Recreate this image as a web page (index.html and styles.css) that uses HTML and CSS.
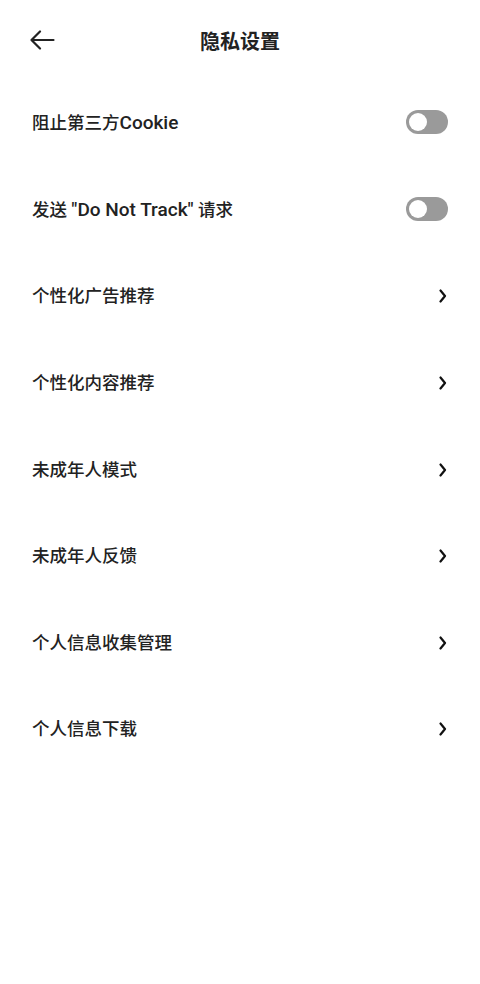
FILE: index.html
```html
<!DOCTYPE html>
<html lang="zh-CN">
<head>
<meta charset="utf-8">
<title>隐私设置</title>
<link rel="stylesheet" href="styles.css">
</head>
<body>
<div class="page">
  <header class="topbar">
    <svg class="back" width="26" height="20" viewBox="0 0 26 20" aria-hidden="true">
      <path d="M24.5 10H2.5M11 1.5L2.5 10L11 18.5" fill="none" stroke="#222" stroke-width="2.2" stroke-linecap="round" stroke-linejoin="round"/>
    </svg>
    <h1 class="title">隐私设置</h1>
  </header>
  <ul class="list">
    <li class="row"><span class="label">阻止第三方<span class="latin">Cookie</span></span><span class="switch"><span class="knob"></span></span></li>
    <li class="row"><span class="label">发送 <span class="latin">"Do Not Track"</span> 请求</span><span class="switch"><span class="knob"></span></span></li>
    <li class="row"><span class="label">个性化广告推荐</span><svg class="chev" width="8" height="14" viewBox="0 0 8 14"><path d="M1.5 1.5L6 7L1.5 12.5" fill="none" stroke="#111" stroke-width="2.2" stroke-linecap="round" stroke-linejoin="round"/></svg></li>
    <li class="row"><span class="label">个性化内容推荐</span><svg class="chev" width="8" height="14" viewBox="0 0 8 14"><path d="M1.5 1.5L6 7L1.5 12.5" fill="none" stroke="#111" stroke-width="2.2" stroke-linecap="round" stroke-linejoin="round"/></svg></li>
    <li class="row"><span class="label">未成年人模式</span><svg class="chev" width="8" height="14" viewBox="0 0 8 14"><path d="M1.5 1.5L6 7L1.5 12.5" fill="none" stroke="#111" stroke-width="2.2" stroke-linecap="round" stroke-linejoin="round"/></svg></li>
    <li class="row"><span class="label">未成年人反馈</span><svg class="chev" width="8" height="14" viewBox="0 0 8 14"><path d="M1.5 1.5L6 7L1.5 12.5" fill="none" stroke="#111" stroke-width="2.2" stroke-linecap="round" stroke-linejoin="round"/></svg></li>
    <li class="row"><span class="label">个人信息收集管理</span><svg class="chev" width="8" height="14" viewBox="0 0 8 14"><path d="M1.5 1.5L6 7L1.5 12.5" fill="none" stroke="#111" stroke-width="2.2" stroke-linecap="round" stroke-linejoin="round"/></svg></li>
    <li class="row"><span class="label">个人信息下载</span><svg class="chev" width="8" height="14" viewBox="0 0 8 14"><path d="M1.5 1.5L6 7L1.5 12.5" fill="none" stroke="#111" stroke-width="2.2" stroke-linecap="round" stroke-linejoin="round"/></svg></li>
  </ul>
</div>
</body>
</html>
```
FILE: styles.css
```css
* { box-sizing: border-box; }
html, body {
  margin: 0;
  padding: 0;
  background: #fff;
}
body {
  font-family: Roboto, "Noto Sans CJK SC", "Noto Sans", sans-serif;
  color: #222;
}
.page {
  width: 480px;
  min-height: 984px;
}
.topbar {
  height: 80px;
  display: flex;
  align-items: center;
  justify-content: center;
  position: relative;
}
.back {
  position: absolute;
  left: 29px;
  top: 30px;
}
.title {
  margin: 0;
  font-size: 20px;
  font-weight: 700;
  color: #222;
  letter-spacing: 0;
}
.list {
  list-style: none;
  margin: 0;
  padding: 0;
}
.row {
  height: 86.6px;
  display: flex;
  align-items: center;
  justify-content: space-between;
  padding: 0 32px 0 32px;
}
.label {
  font-size: 17.5px;
  font-weight: 500;
  color: #222;
  line-height: 24px;
}
.latin {
  font-size: 19px;
}
.switch {
  width: 42px;
  height: 24px;
  border-radius: 12px;
  background: #9a9a9a;
  display: flex;
  align-items: center;
  padding-left: 3px;
  margin-top: -2px;
}
.knob {
  width: 18px;
  height: 18px;
  border-radius: 50%;
  background: #fff;
}
.chev {
  margin-right: 1px;
}
```
